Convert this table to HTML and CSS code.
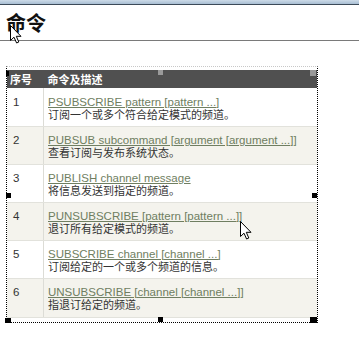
FILE: index.html
```html
<!DOCTYPE html>
<html lang="zh">
<head>
<meta charset="utf-8">
<title>命令</title>
<link rel="stylesheet" href="styles.css">
</head>
<body>
<div class="topbar"></div>
<h2 class="title">命令</h2>
<div class="selbox">
  <table class="cmd">
    <thead>
      <tr><th class="num">序号</th><th>命令及描述</th></tr>
    </thead>
    <tbody>
      <tr><td class="num">1</td><td><a href="#">PSUBSCRIBE pattern [pattern ...]</a><br>订阅一个或多个符合给定模式的频道。</td></tr>
      <tr><td class="num">2</td><td><a href="#">PUBSUB subcommand [argument [argument ...]]</a><br>查看订阅与发布系统状态。</td></tr>
      <tr><td class="num">3</td><td><a href="#">PUBLISH channel message</a><br>将信息发送到指定的频道。</td></tr>
      <tr><td class="num">4</td><td><a href="#">PUNSUBSCRIBE [pattern [pattern ...]]</a><br>退订所有给定模式的频道。</td></tr>
      <tr><td class="num">5</td><td><a href="#">SUBSCRIBE channel [channel ...]</a><br>订阅给定的一个或多个频道的信息。</td></tr>
      <tr><td class="num">6</td><td><a href="#">UNSUBSCRIBE [channel [channel ...]]</a><br>指退订给定的频道。</td></tr>
    </tbody>
  </table>
  <span class="handle h-tl"></span>
  <span class="handle light h-tm"></span>
  <span class="handle light h-tr"></span>
  <span class="handle h-ml"></span>
  <span class="handle h-mr"></span>
  <span class="handle h-bl"></span>
  <span class="handle h-bm"></span>
  <span class="handle h-br"></span>
</div>
<svg class="cursor c1" width="13" height="19" viewBox="0 0 13 19"><path d="M0.5 0.5 L0.5 15.5 L4 12.2 L6.6 18 L8.8 17 L6.3 11.3 L11 11.3 Z" fill="#fff" stroke="#000" stroke-width="1"/></svg>
<svg class="cursor c2" width="13" height="19" viewBox="0 0 13 19"><path d="M0.5 0.5 L0.5 15.5 L4 12.2 L6.6 18 L8.8 17 L6.3 11.3 L11 11.3 Z" fill="#fff" stroke="#000" stroke-width="1"/></svg>
</body>
</html>
```
FILE: styles.css
```css
html, body {
  margin: 0;
  padding: 0;
  background: #fff;
}
body {
  font-family: "Liberation Sans", Arial, "Noto Sans CJK SC", sans-serif;
  position: relative;
  width: 359px;
  height: 343px;
  overflow: hidden;
}
.topbar {
  height: 4px;
  background: linear-gradient(#cddbe8, #a8bed3);
  border-bottom: 1px solid #3c4a58;
}
.title {
  margin: 0;
  padding: 8px 0 7px 6px;
  height: 20px;
  font-family: "Noto Sans CJK SC", sans-serif;
  font-size: 20px;
  line-height: 20px;
  font-weight: bold;
  color: #111;
  border-bottom: 1px solid #7a7a7a;
}
.selbox {
  position: relative;
  margin: 25px 0 0 6px;
  width: 310px;
  padding: 3px 0 4px 0;
  border: 1px dotted #000;
  border-top-color: #c8c8c8;
}
.cmd {
  width: 310px;
  border-collapse: collapse;
  font-size: 11px;
  line-height: 13px;
  color: #333;
}
.cmd th {
  background: #505050;
  color: #fff;
  font-weight: bold;
  text-align: left;
  height: 18px;
  padding: 0 4px;
  font-family: "Noto Sans CJK SC", sans-serif;
  font-size: 11px;
  line-height: 18px;
}
.cmd th.num {
  padding-left: 3px;
}
.cmd td {
  vertical-align: top;
  padding: 7px 4px 4px 4px;
  height: 26px;
  border-bottom: 1px solid #e2e2dc;
}
.cmd tbody tr:first-child td {
  padding-top: 8px;
}
.cmd tbody tr:last-child td {
  padding-bottom: 5px;
}
.cmd td.num {
  width: 26px;
  padding-left: 6px;
  border-right: 1px solid #dcdcd6;
  font-size: 11.5px;
}
.cmd tbody tr:nth-child(even) td {
  background: #f4f3ed;
}
.cmd a {
  color: #6f7e61;
  text-decoration: underline;
  font-size: 11.5px;
}
.handle {
  position: absolute;
  width: 5px;
  height: 5px;
  background: #000;
}
.handle.light {
  background: #9a9a9a;
}
.h-tl { left: -1px; top: 4px; width: 3px; }
.h-tm { left: 151px; top: 3px; }
.h-tr { left: 303px; top: 3px; width: 6px; height: 6px; }
.h-ml { left: -1px; top: 126px; }
.h-mr { left: 305px; top: 126px; }
.h-bl { left: -2px; top: 251px; width: 6px; }
.h-bm { left: 151px; top: 250px; }
.h-br { left: 303px; top: 250px; width: 7px; height: 6px; }
.cursor {
  position: absolute;
}
.c1 { left: 10px; top: 25px; }
.c2 { left: 240px; top: 221px; }
```
